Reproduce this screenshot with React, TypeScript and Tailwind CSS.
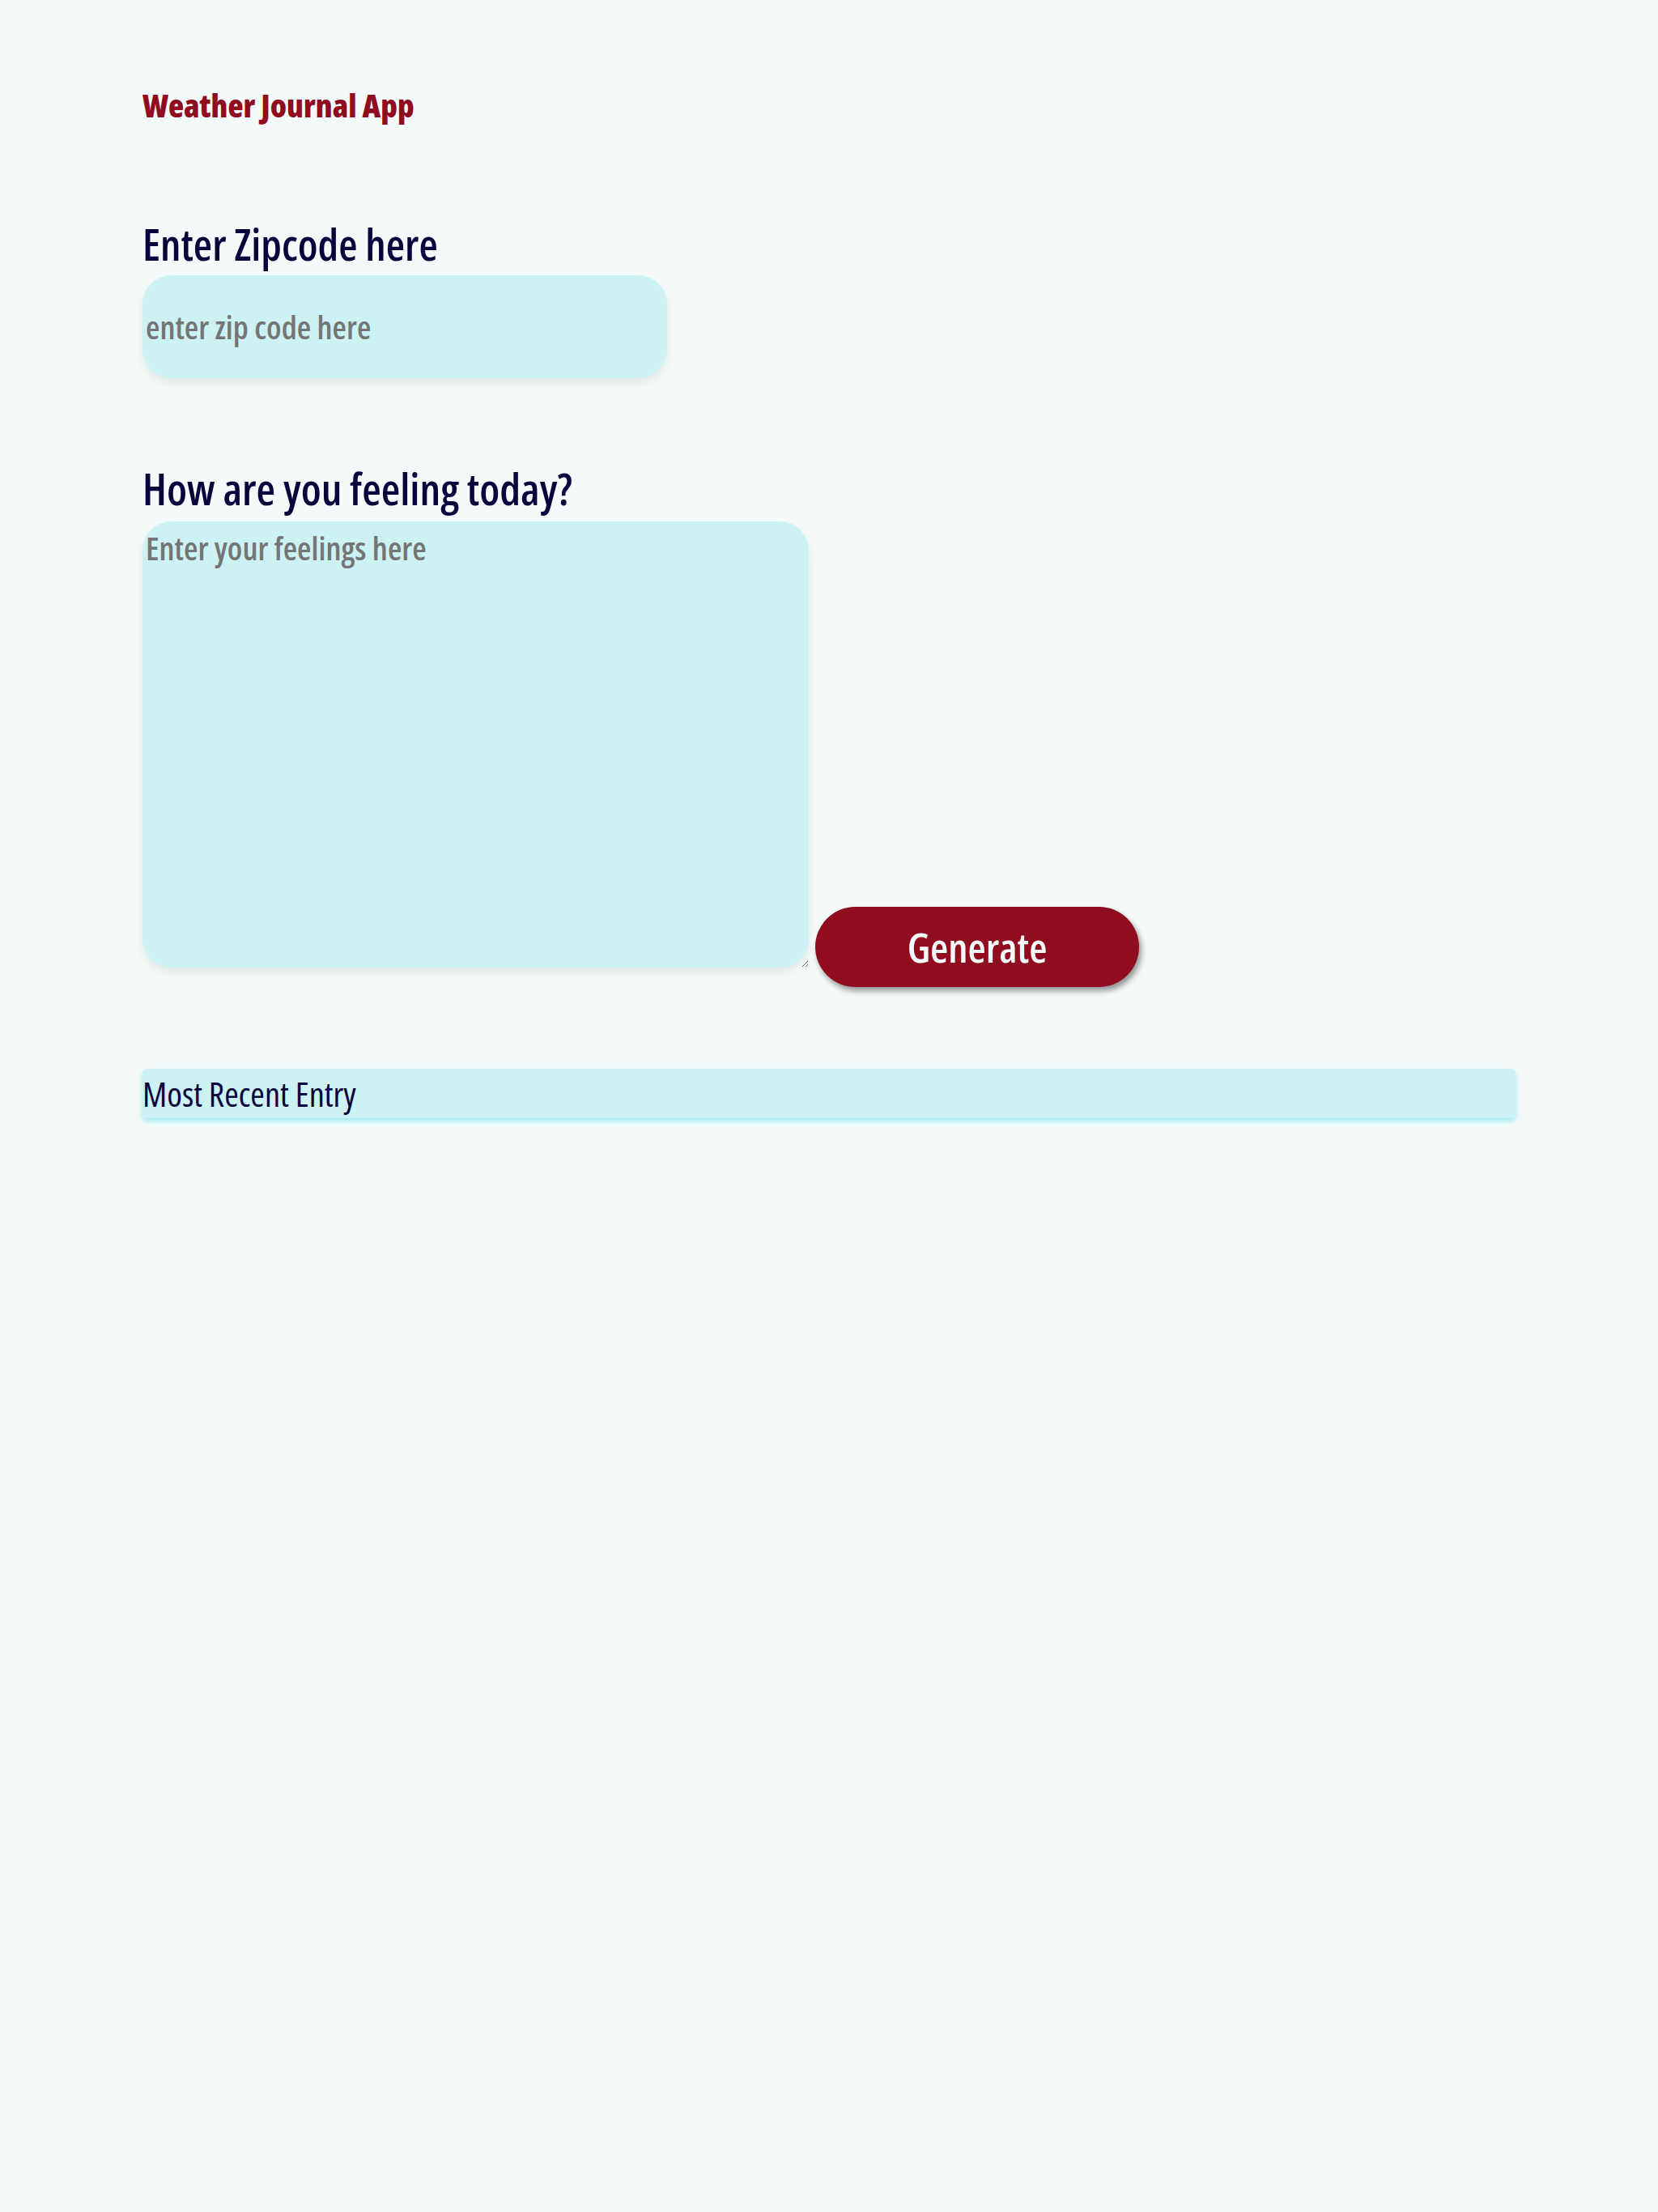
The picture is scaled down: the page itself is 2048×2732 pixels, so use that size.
import { useState } from "react";

export default function App() {
  const [zip, setZip] = useState("");
  const [feelings, setFeelings] = useState("");

  return (
    <div className="min-h-screen w-full bg-[#f4f9f9] px-[176px] font-['Open_Sans',sans-serif] font-stretch-condensed">
      <header className="pt-[106px]">
        <h1 className="text-[39.5px] leading-[48px] font-extrabold text-[#900c1f]">
          Weather Journal App
        </h1>
      </header>

      <main className="flex flex-col">
        {/* zip */}
        <div className="mt-[118px] flex flex-col">
          <label htmlFor="zip" className="text-[53.5px] leading-[60px] font-semibold text-[#0a043c]">
            Enter Zipcode here
          </label>
          <input
            id="zip"
            value={zip}
            onChange={(e) => setZip(e.target.value)}
            placeholder="enter zip code here"
            className="mt-[8px] h-[127px] w-[648px] rounded-[36px] bg-[#ccf2f4] pl-[4px] text-[40px] font-semibold text-[#0a043c] placeholder:text-[#757575] shadow-[0_6px_10px_rgba(0,0,0,0.08)] outline-none"
          />
        </div>

        {/* feelings */}
        <div className="mt-[106px] flex flex-col">
          <label htmlFor="feelings" className="text-[54px] leading-[60px] font-semibold text-[#0a043c]">
            How are you feeling today?
          </label>
          <div className="mt-[11px] flex items-end gap-[8px]">
            <textarea
              id="feelings"
              value={feelings}
              onChange={(e) => setFeelings(e.target.value)}
              placeholder="Enter your feelings here"
              className="h-[551px] w-[823px] rounded-[36px] bg-[#ccf2f4] pl-[4px] pt-[3px] text-[40px] leading-[60px] font-semibold text-[#0a043c] placeholder:text-[#757575] shadow-[0_6px_10px_rgba(0,0,0,0.08)] outline-none"
            />
            <button className="mb-[-24px] h-[99px] w-[400px] rounded-full bg-[#900c1f] text-[51px] font-semibold text-[#f4f9f9] shadow-[3px_5px_7px_rgba(0,0,0,0.4)] cursor-pointer">
              Generate
            </button>
          </div>
        </div>

        {/* entry */}
        <section className="mt-[125px] flex h-[61px] items-center rounded-[6px] bg-[#ccf2f4] shadow-[0_4px_6px_#a4ebf3]">
          <h2 className="text-[42.5px] leading-[61px] font-medium text-[#0a043c]">Most Recent Entry</h2>
        </section>
      </main>
    </div>
  );
}
